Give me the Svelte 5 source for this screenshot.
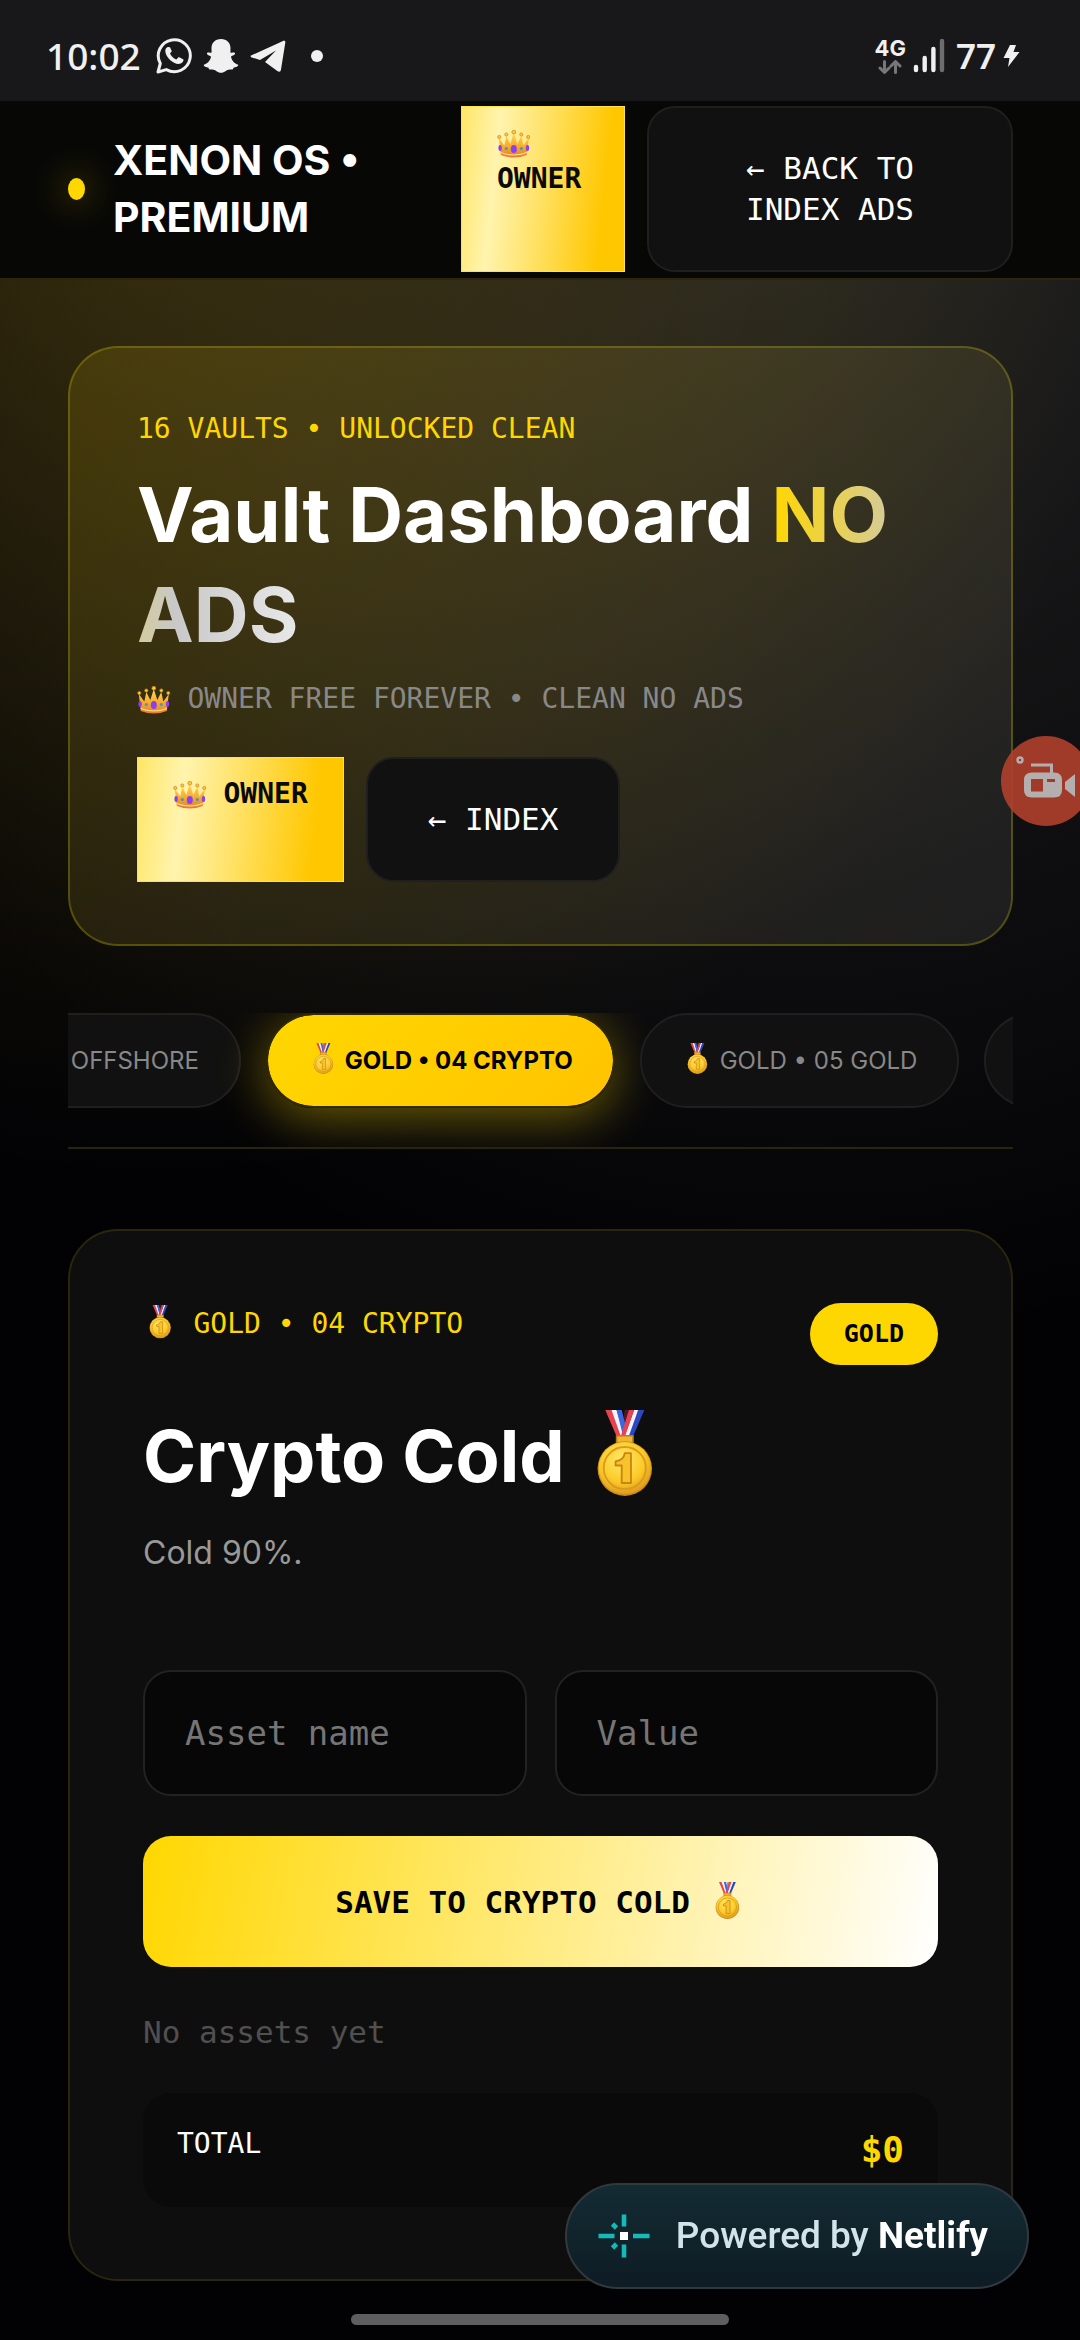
<script>
  import { onMount } from "svelte";

  const vaults = [
    { id: 3, label: "GOLD • 03 OFFSHORE", name: "Offshore", note: "", tier: "GOLD" },
    { id: 4, label: "GOLD • 04 CRYPTO", name: "Crypto Cold", note: "Cold 90%.", tier: "GOLD" },
    { id: 5, label: "GOLD • 05 GOLD", name: "Gold", note: "", tier: "GOLD" },
    { id: 6, label: "GOLD • 06 VAULT", name: "Vault", note: "", tier: "GOLD" }
  ];

  let activeId = $state(4);
  let assets = $state([]);
  let assetName = $state("");
  let assetValue = $state("");
  let tabBar;

  let vault = $derived(vaults.find((v) => v.id === activeId));
  let mine = $derived(assets.filter((a) => a.vault === activeId));
  let total = $derived(mine.reduce((sum, a) => sum + a.value, 0));

  function save(e) {
    e.preventDefault();
    if (!assetName) return;
    assets.push({ vault: activeId, name: assetName, value: Number(assetValue) || 0 });
    assetName = "";
    assetValue = "";
  }

  onMount(() => {
    // keep a piece of the previous tab in view
    const active = tabBar.querySelector(".active");
    tabBar.scrollLeft = active.offsetLeft - tabBar.offsetLeft - 198;
  });
</script>

{#snippet crown()}
  <svg class="crown" role="img" aria-label="crown"><use href="#crown" /></svg>
{/snippet}

{#snippet medal()}
  <svg class="medal" role="img" aria-label="gold medal"><use href="#medal" /></svg>
{/snippet}

<svg class="defs" aria-hidden="true">
  <defs>
    <linearGradient id="crown-gold" x1="0" y1="0" x2="0" y2="1">
      <stop offset="0" stop-color="#ffd84a" />
      <stop offset="0.6" stop-color="#f8a62e" />
      <stop offset="1" stop-color="#e07a3a" />
    </linearGradient>
    <radialGradient id="medal-gold" cx="0.45" cy="0.35" r="0.7">
      <stop offset="0" stop-color="#ffea6b" />
      <stop offset="0.6" stop-color="#fbc927" />
      <stop offset="1" stop-color="#d8921c" />
    </radialGradient>
  </defs>
  <symbol id="crown" viewBox="0 0 33 28">
    <path d="M3.500 25 L1.500 8 L7 15.500 L9 6 L13 14 L16.500 3 L20 14 L24 6 L26 15.500 L31.500 8 L29.500 25 Q16.500 30 3.500 25 Z" fill="url(#crown-gold)" />
    <path d="M3.300 22.500 Q16.500 27.500 29.700 22.500" fill="none" stroke="#ffdf78" stroke-width="1.200" />
    <g fill="#ffc93c" stroke="#c98222" stroke-width="0.700">
      <circle cx="2" cy="7" r="1.600" />
      <circle cx="9" cy="4.500" r="1.600" />
      <circle cx="16.500" cy="2.200" r="1.900" />
      <circle cx="24" cy="4.500" r="1.600" />
      <circle cx="31" cy="7" r="1.600" />
    </g>
    <g fill="#8a3ff0">
      <ellipse cx="16.500" cy="19" rx="3" ry="3.900" />
      <ellipse cx="2.800" cy="18" rx="1.700" ry="3" />
      <ellipse cx="30.200" cy="18" rx="1.700" ry="3" />
    </g>
    <circle cx="9" cy="18.500" r="1.600" fill="#3aa0b8" />
    <circle cx="24" cy="18.500" r="1.600" fill="#3aa0b8" />
  </symbol>
  <symbol id="medal" viewBox="0 0 56 84">
    <path d="M28 0 H33 L29 24 H24 Z" fill="#8b1f3c" opacity="0.500" />
    <path d="M9 0 H15 L27 28 H21 Z" fill="#e8414f" />
    <path d="M15 0 H20 L29 28 H25 Z" fill="#f4f4fa" />
    <path d="M20 0 H25 L32 28 H27 Z" fill="#3a66e0" />
    <path d="M47 0 H41 L29 28 H35 Z" fill="#2c48c0" />
    <path d="M41 0 H37 L27 28 H31 Z" fill="#f4f4fa" />
    <path d="M37 0 H32 L24 26 H28 Z" fill="#e8414f" />
    <path d="M20 25 H36 V32 H20 Z" fill="#f0b52c" stroke="#b97a17" stroke-width="1.500" />
    <circle cx="28" cy="57" r="26.500" fill="#c98a1c" />
    <circle cx="28" cy="56.500" r="25.500" fill="url(#medal-gold)" />
    <circle cx="28" cy="56.500" r="20.500" fill="none" stroke="#d99a1f" stroke-width="1.800" />
    <path d="M19 50 Q27 49 28 42 H34 V71 H25 V54 H19 Z" fill="#f7c22a" stroke="#c98512" stroke-width="1.800" stroke-linejoin="round" />
  </symbol>
</svg>

<div class="statusbar">
  <div class="left">
    <span class="time">10:02</span>
    <svg width="36" height="37" viewBox="0 0 36 37">
      <path d="M2 35 L4.300 26.500 A16 16 0 1 1 10.300 32.600 Z" fill="none" stroke="#f0f0f0" stroke-width="3" stroke-linejoin="round" />
      <path d="M12.500 10 C10.500 10 9 12 9.300 14.500 C10 20.500 17 26.800 22.500 27 C25.500 27 27.600 25 27.500 22.600 L22.800 20 L20.300 22.500 C17.500 21.500 15 19 14 16.500 L15.800 14.200 L14 10.300 Z" fill="#f0f0f0" />
    </svg>
    <svg width="36" height="36" viewBox="0 0 36 36">
      <path d="M18 1 C12 1 8.500 5 8.500 10 L8.600 14.500 C7 15.200 5.500 14.200 4.300 14.800 C3 16 5.500 17.500 8 18.500 C7.500 22.500 4.500 25.500 .8 26.800 C.2 28.500 3.500 29.300 5.500 29.700 C6 31.500 6.500 31.800 8.500 31.500 C12.500 31 14 34.800 18 34.800 C22 34.800 23.500 31 27.500 31.500 C29.500 31.800 30 31.500 30.500 29.700 C32.500 29.300 35.800 28.500 35.200 26.800 C31.500 25.500 28.500 22.500 28 18.500 C30.500 17.500 33 16 31.700 14.800 C30.500 14.200 29 15.200 27.400 14.500 L27.500 10 C27.500 5 24 1 18 1 Z" fill="#f0f0f0" />
    </svg>
    <svg width="36" height="34" viewBox="0 0 36 34">
      <path d="M1 16.500 L32.500 2.200 C35 1.200 35.600 2 35.200 4.300 L31 30.500 C30.600 33 29 33.200 27 31.800 L15 23 L26 11.500 L10 21 L1.800 18.400 C.3 17.900 .3 17 1 16.500 Z" fill="#f0f0f0" />
    </svg>
    <i class="more"></i>
  </div>
  <div class="right">
    <div class="network">
      <span>4G</span>
      <svg width="24" height="14" viewBox="0 0 24 14" fill="none" stroke="#77777a" stroke-width="3" stroke-linecap="round" stroke-linejoin="round">
        <path d="M6.500 1.500 V12 M2 8 L6.500 12.500 L11 8 M17.500 12.500 V2 M13 6 L17.500 1.500 L22 6" />
      </svg>
    </div>
    <svg width="32" height="36" viewBox="0 0 32 36" stroke-width="4.400" stroke-linecap="round">
      <path d="M3 29 V32 M11.700 20 V32 M20.400 11 V32" stroke="#f0f0f0" />
      <path d="M29 3 V32" stroke="#6d6d70" />
    </svg>
    <span class="battery">77</span>
    <svg width="17" height="24" viewBox="0 0 17 24">
      <path d="M7 1 H13 L10.500 8 H16.500 L5 23 L6.500 14 H.5 Z" fill="#f0f0f0" />
    </svg>
  </div>
</div>

<header>
  <div class="brand">
    <span class="dot"></span>
    <strong>XENON OS • PREMIUM</strong>
  </div>
  <span class="owner">{@render crown()} OWNER</span>
  <a class="back" href="#index">← BACK TO INDEX ADS</a>
</header>

<main>
  <section class="hero">
    <p class="label">16 VAULTS • UNLOCKED CLEAN</p>
    <h1>Vault Dashboard <span>NO ADS</span></h1>
    <p class="sub">{@render crown()} OWNER FREE FOREVER • CLEAN NO ADS</p>
    <div class="actions">
      <span class="owner">{@render crown()} OWNER</span>
      <a class="back" href="#index">← INDEX</a>
    </div>
  </section>

  <nav class="tabs" bind:this={tabBar}>
    {#each vaults as v (v.id)}
      <button class:active={v.id === activeId} onclick={() => (activeId = v.id)}>{@render medal()} {v.label}</button>
    {/each}
  </nav>

  <section class="vault">
    <div class="top">
      <p class="label">{@render medal()} {vault.label}</p>
      <span class="tier">{vault.tier}</span>
    </div>
    <h2>{vault.name} {@render medal()}</h2>
    <p class="note">{vault.note}</p>

    <form onsubmit={save}>
      <input aria-label="Asset name" placeholder="Asset name" bind:value={assetName} />
      <input aria-label="Value" placeholder="Value" inputmode="numeric" bind:value={assetValue} />
      <button type="submit">SAVE TO {vault.name.toUpperCase()} {@render medal()}</button>
    </form>

    {#each mine as asset}
      <p class="asset">{asset.name} ${asset.value}</p>
    {:else}
      <p class="asset">No assets yet</p>
    {/each}

    <div class="total">
      <span>TOTAL</span>
      <b>${total}</b>
    </div>
  </section>
</main>

<button class="recorder" aria-label="Screen recorder">
  <svg width="66" height="60" viewBox="0 0 66 60">
    <circle cx="5" cy="10" r="2.500" fill="none" stroke="#b5aeae" stroke-width="2.400" />
    <path d="M16 15 H36.500 V24" fill="none" stroke="#b5aeae" stroke-width="3" />
    <path fill-rule="evenodd" d="M17 22.500 H39 Q47 22.500 47 30 V40 Q47 47.500 39 47.500 H17 Q9 47.500 9 40 V30 Q9 22.500 17 22.500 Z M16 29 V41.500 H28 V29 Z M32 29 V32 H40 V29 Z" fill="#b5aeae" />
    <path d="M50 32 L60 24 V47 L50 39 Z" fill="#b5aeae" />
  </svg>
</button>

<a class="netlify" href="#netlify">
  <svg width="52" height="46" viewBox="0 0 52 46">
    <path d="M26 1.500 V13.500 M26 31.500 V44.500 M.5 23 H16.500 M35 23 H51.500" stroke="#14bab7" stroke-width="4.600" />
    <path d="M14.500 11 L18.500 15 M14.500 35 L18.500 31" stroke="#14bab7" stroke-width="4.600" />
    <path d="M22 19 H30 V27 H22 Z" fill="#fff" />
  </svg>
  <span>Powered by <b>Netlify</b></span>
</a>

<div class="homebar"></div>

<style>
  :global(body) {
    background: #020205;
    color: #fff;
    font-family: Inter, sans-serif;
  }

  :global(#app) {
    min-height: 100vh;
    background:
      radial-gradient(ellipse 1000px 1080px at 15% 100px, rgba(255, 200, 0, 0.18), transparent),
      radial-gradient(ellipse 1100px 1250px at 75% 100px, rgba(230, 230, 215, 0.15), transparent);
  }

  p, h1, h2 {
    margin: 0;
  }

  a {
    color: inherit;
    text-decoration: none;
  }

  .defs {
    position: absolute;
    width: 0;
    height: 0;
  }

  .crown {
    width: 1.2em;
    height: 1em;
    vertical-align: -0.2em;
  }

  .medal {
    width: 0.8em;
    height: 1.2em;
    margin: -0.2em 0.2em;
    vertical-align: 0;
  }

  .statusbar {
    display: flex;
    justify-content: space-between;
    align-items: center;
    height: 101px;
    padding: 10px 60px 0 46px;
    box-sizing: border-box;
    background: #18181a;
    color: #f0f0f0;
    font-family: "Noto Sans", sans-serif;
  }

  .left, .right {
    display: flex;
    align-items: center;
    gap: 11px;
  }

  .time {
    margin-right: 4px;
    font-size: 37px;
    font-weight: 500;
  }

  .more {
    width: 12px;
    height: 12px;
    margin-left: 14px;
    border-radius: 50%;
    background: #f0f0f0;
  }

  .right {
    gap: 7px;
  }

  .network {
    display: flex;
    flex-direction: column;
    align-items: center;
    gap: 2px;
    font: 700 22px/20px Inter, sans-serif;
  }

  .battery {
    margin-left: 4px;
    font-size: 35px;
    font-weight: 600;
  }

  header {
    display: flex;
    align-items: stretch;
    gap: 22px;
    padding: 5px 67px 6px 68px;
    background: #070706;
    border-bottom: 2px solid #2d260c;
  }

  .brand {
    display: flex;
    flex: 1;
    align-items: center;
    gap: 28px;
  }

  .brand strong {
    width: 260px;
    font-size: 41px;
    line-height: 57px;
  }

  .dot {
    width: 17px;
    height: 22px;
    border-radius: 50%;
    background: #ffd700;
    box-shadow: 0 0 36px rgba(255, 215, 0, 0.6);
  }

  .owner {
    box-sizing: border-box;
    padding: 18px 35px;
    background: linear-gradient(96deg, #ffe666, #fff4ae 22%, #ffc700 85%);
    border: 1px solid #ffe14d;
    color: #0a0a0a;
    font: 700 28px/36px "DejaVu Sans Mono", monospace;
  }

  header .owner {
    width: 164px;
  }

  .back {
    box-sizing: border-box;
    padding: 40px 60px;
    border: 2px solid #1f1f1f;
    border-radius: 28px;
    background: #111;
    font: 31px/41px "DejaVu Sans Mono", monospace;
    text-align: center;
  }

  header .back {
    width: 366px;
  }

  main {
    display: flex;
    flex-direction: column;
    padding: 66px 67px 54px 68px;
  }

  .hero {
    padding: 60px 67px 62px;
    border: 2px solid rgba(215, 205, 0, 0.27);
    border-radius: 50px;
    background: linear-gradient(135deg, rgba(255, 215, 0, 0.12), rgba(255, 255, 255, 0.07));
  }

  .label, .sub {
    font: 28px/42px "DejaVu Sans Mono", monospace;
    color: #ffd700;
  }

  h1 {
    margin: 14px 0;
    font-size: 76px;
    line-height: 100px;
  }

  h1 span {
    background: linear-gradient(90deg, #ffd700, #c8c8c8 55%, #e8e8e8);
    background-clip: text;
    color: transparent;
  }

  .sub {
    color: #888;
  }

  .actions {
    display: flex;
    gap: 22px;
    margin-top: 37px;
  }

  .tabs {
    display: flex;
    gap: 25px;
    margin: 67px 0 80px;
    padding-bottom: 39px;
    overflow: hidden;
    border-bottom: 2px solid #29250b;
  }

  .tabs button {
    flex: none;
    height: 95px;
    padding: 0 40px;
    border: 2px solid #1f1f1f;
    border-radius: 48px;
    background: #111;
    color: #888;
    font: 24px Inter, sans-serif;
  }

  .tabs .active {
    background: linear-gradient(135deg, #ffd700, #ffc400);
    background-clip: padding-box;
    border-color: #332b05;
    box-shadow: 0 10px 50px rgba(255, 215, 0, 0.4);
    color: #000;
    font-weight: 700;
  }

  .tabs .medal {
    font-size: 26px;
  }

  .vault {
    padding: 72px 73px;
    border: 2px solid #29260d;
    border-radius: 50px;
    background: #0e0e0e;
  }

  .top {
    display: flex;
    justify-content: space-between;
    align-items: flex-start;
  }

  .tier {
    padding: 14px 34px;
    border-radius: 31px;
    background: #ffd700;
    color: #000;
    font: 700 25px/34px "DejaVu Sans Mono", monospace;
  }

  h2 {
    margin-top: 43px;
    font-size: 72px;
    line-height: 96px;
  }

  .note {
    min-height: 48px;
    margin-top: 25px;
    font-size: 32px;
    line-height: 48px;
    color: #999;
  }

  form {
    display: grid;
    grid-template-columns: 1fr 1fr;
    gap: 40px 28px;
    margin-top: 93px;
  }

  input {
    box-sizing: border-box;
    min-width: 0;
    height: 126px;
    padding: 0 40px;
    border: 2px solid #222;
    border-radius: 28px;
    background: #070707;
    color: #fff;
    font: 34px "DejaVu Sans Mono", monospace;
  }

  input::placeholder {
    color: #757575;
  }

  form button {
    grid-column: 1 / -1;
    height: 131px;
    border: 0;
    border-radius: 28px;
    background: linear-gradient(100deg, #ffd700, #ffe766 40%, #fff);
    color: #000;
    font: 700 31px "DejaVu Sans Mono", monospace;
  }

  .asset {
    margin-top: 44px;
    font: 31px/42px "DejaVu Sans Mono", monospace;
    color: #505050;
  }

  .total {
    display: flex;
    justify-content: space-between;
    margin-top: 40px;
    padding: 32px 34px;
    border-radius: 28px;
    background: #0a0a0a;
    font: 28px/38px "DejaVu Sans Mono", monospace;
  }

  .total b {
    color: #ffd700;
    font-size: 36px;
    line-height: 50px;
  }

  .recorder {
    position: fixed;
    top: 736px;
    right: -11px;
    width: 90px;
    height: 90px;
    padding: 14px;
    border: 0;
    border-radius: 50%;
    background: rgba(176, 64, 45, 0.9);
  }

  .netlify {
    position: fixed;
    right: 51px;
    bottom: 51px;
    display: flex;
    align-items: center;
    gap: 26px;
    padding: 26px 39px 26px 31px;
    border: 2px solid #31393d;
    border-radius: 54px;
    background: linear-gradient(#132b33, #0e1c24);
    color: #d3e3eb;
    font: 500 37px/50px Roboto, sans-serif;
  }

  .netlify b {
    color: #fff;
    font-weight: 700;
  }

  .homebar {
    position: fixed;
    bottom: 15px;
    left: 50%;
    width: 35%;
    height: 11px;
    border-radius: 6px;
    background: #5e5e5e;
    transform: translateX(-50%);
  }
</style>
